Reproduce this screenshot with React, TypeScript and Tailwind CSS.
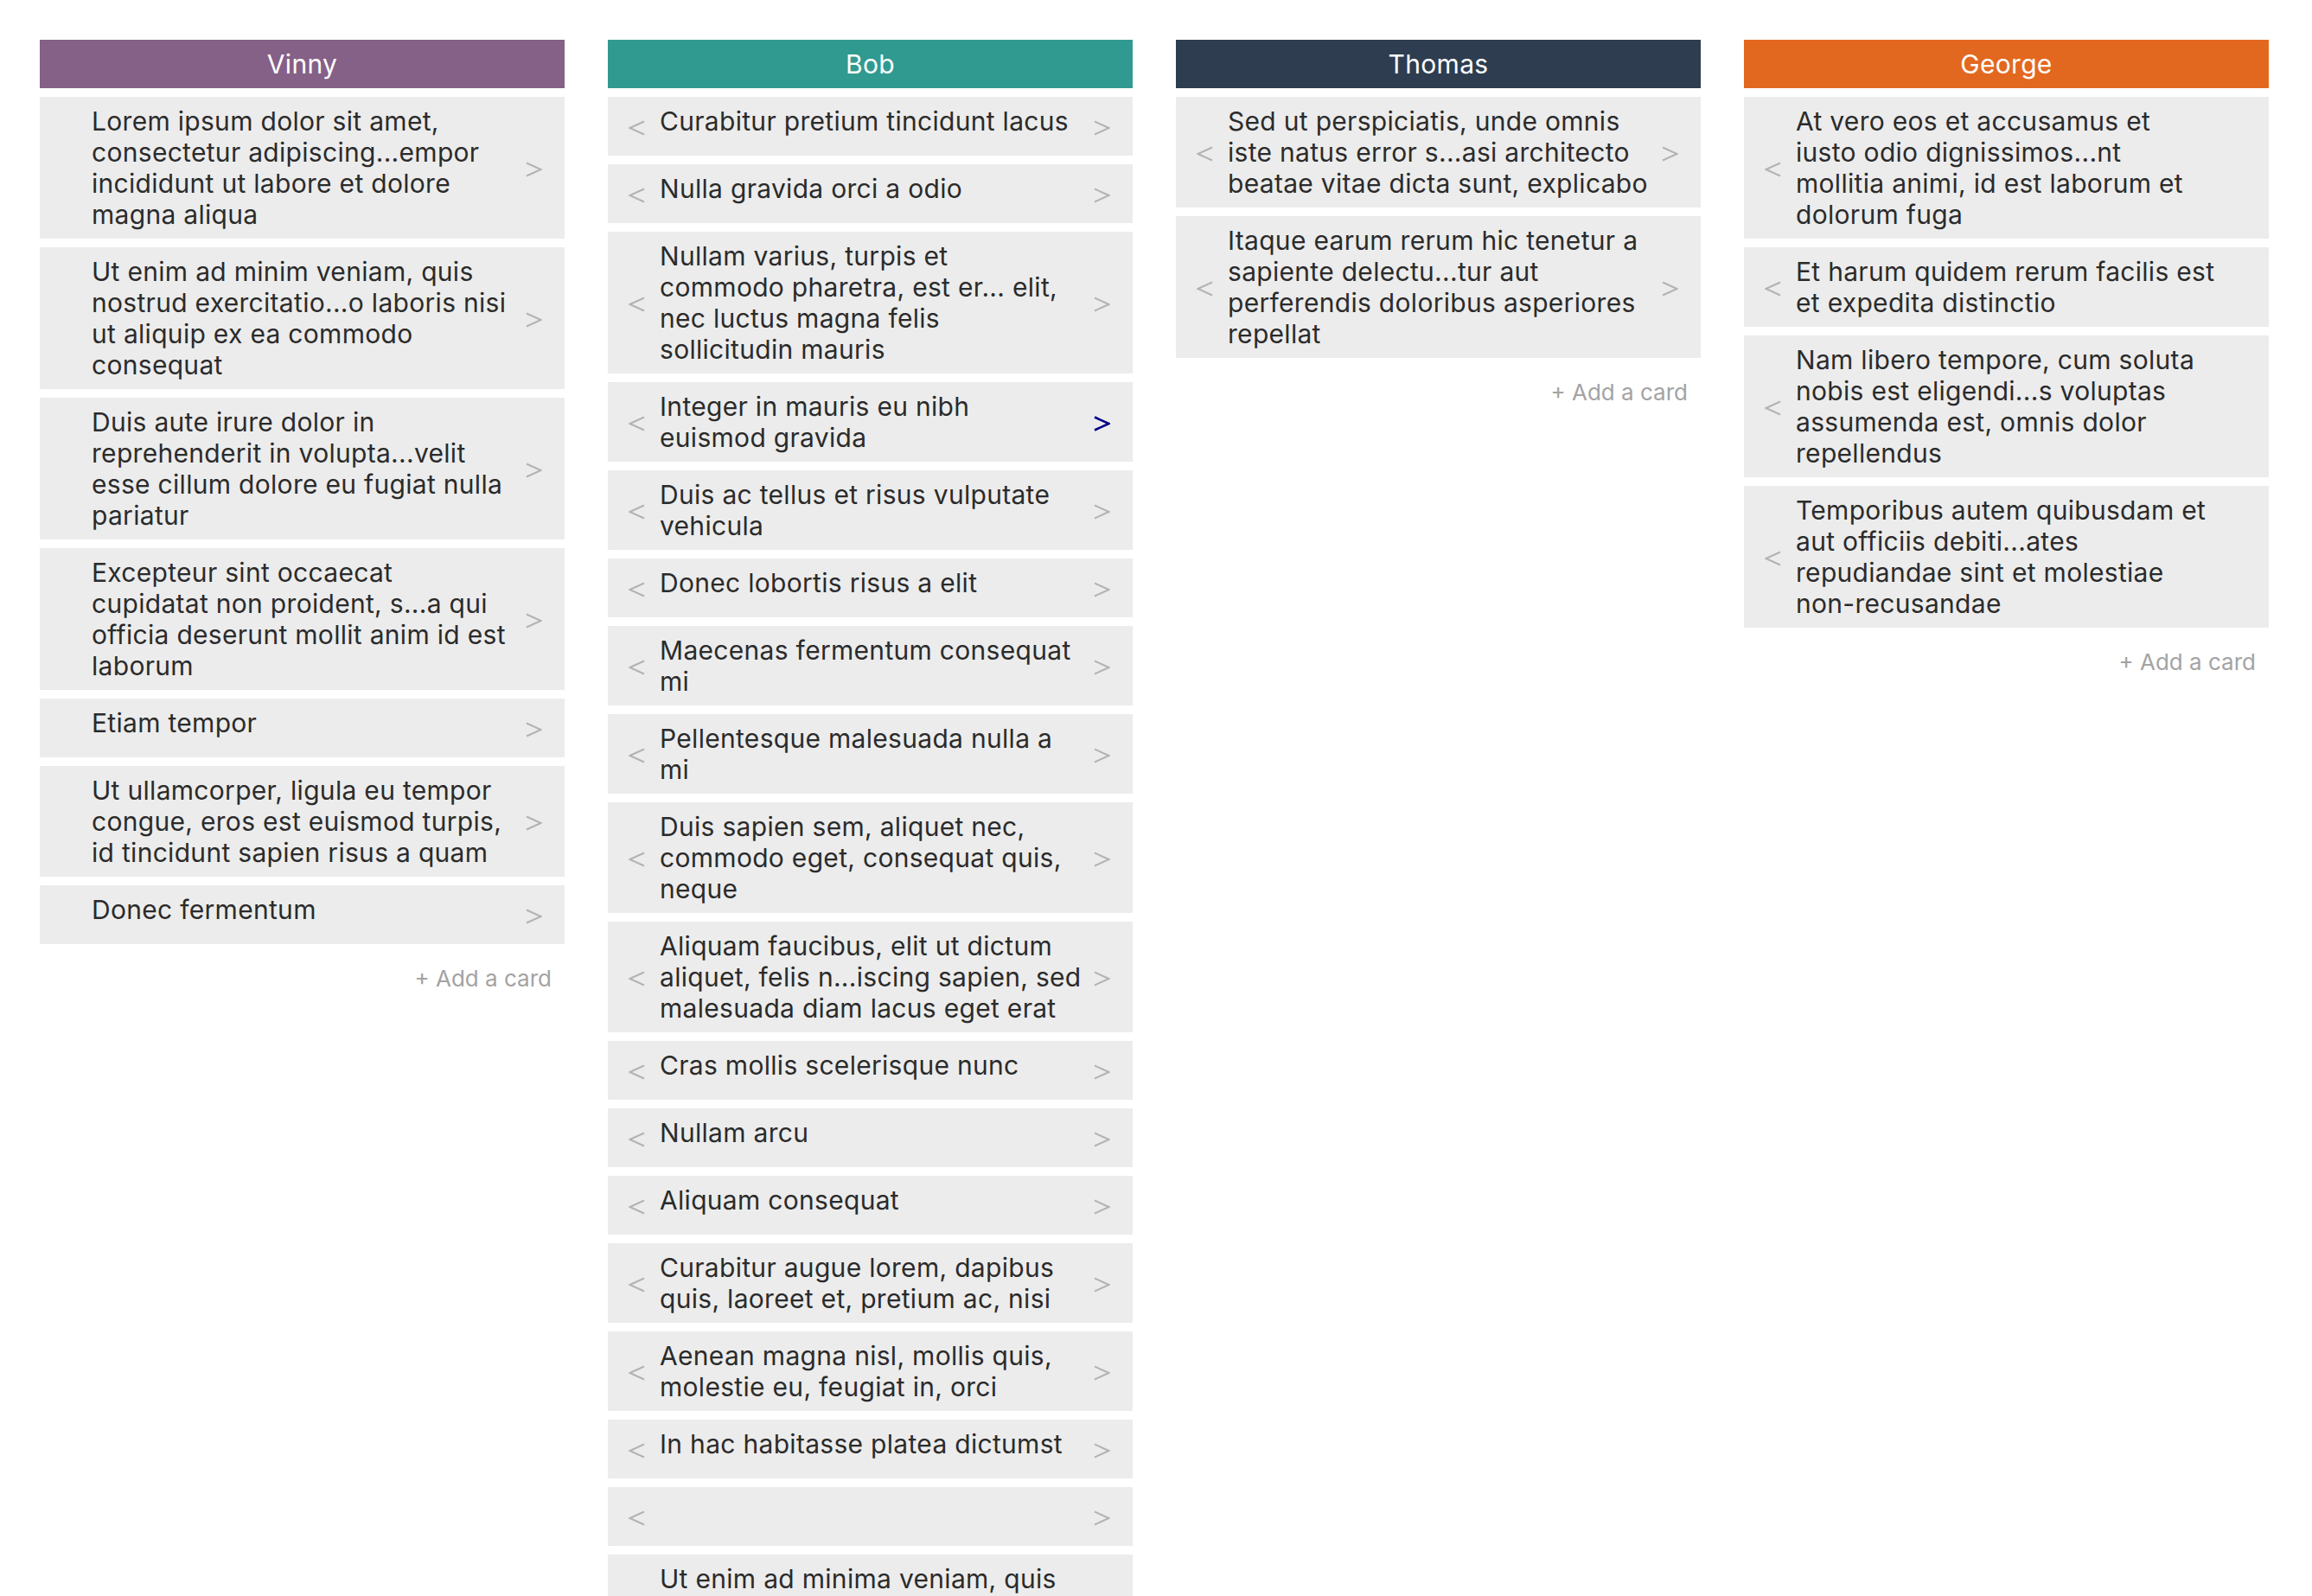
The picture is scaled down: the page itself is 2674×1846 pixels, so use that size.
import React, { FC } from "react";

interface Card {
	lines: string[];
	active?: boolean;
}

interface Lane {
	title: string;
	color: string;
	cards: Card[];
}

const c = (...lines: string[]): Card => ({ lines });

const lanes: Lane[] = [
	{
		title: "Vinny",
		color: "bg-[#856087]",
		cards: [
			c("Lorem ipsum dolor sit amet,", "consectetur adipiscing...empor", "incididunt ut labore et dolore", "magna aliqua"),
			c("Ut enim ad minim veniam, quis", "nostrud exercitatio...o laboris nisi", "ut aliquip ex ea commodo", "consequat"),
			c("Duis aute irure dolor in", "reprehenderit in volupta...velit", "esse cillum dolore eu fugiat nulla", "pariatur"),
			c("Excepteur sint occaecat", "cupidatat non proident, s...a qui", "officia deserunt mollit anim id est", "laborum"),
			c("Etiam tempor"),
			c("Ut ullamcorper, ligula eu tempor", "congue, eros est euismod turpis,", "id tincidunt sapien risus a quam"),
			c("Donec fermentum"),
		],
	},
	{
		title: "Bob",
		color: "bg-[#319a90]",
		cards: [
			c("Curabitur pretium tincidunt lacus"),
			c("Nulla gravida orci a odio"),
			c("Nullam varius, turpis et", "commodo pharetra, est er... elit,", "nec luctus magna felis", "sollicitudin mauris"),
			{ lines: ["Integer in mauris eu nibh", "euismod gravida"], active: true },
			c("Duis ac tellus et risus vulputate", "vehicula"),
			c("Donec lobortis risus a elit"),
			c("Maecenas fermentum consequat", "mi"),
			c("Pellentesque malesuada nulla a", "mi"),
			c("Duis sapien sem, aliquet nec,", "commodo eget, consequat quis,", "neque"),
			c("Aliquam faucibus, elit ut dictum", "aliquet, felis n...iscing sapien, sed", "malesuada diam lacus eget erat"),
			c("Cras mollis scelerisque nunc"),
			c("Nullam arcu"),
			c("Aliquam consequat"),
			c("Curabitur augue lorem, dapibus", "quis, laoreet et, pretium ac, nisi"),
			c("Aenean magna nisl, mollis quis,", "molestie eu, feugiat in, orci"),
			c("In hac habitasse platea dictumst"),
			c(),
			c("Ut enim ad minima veniam, quis", "nostrum exercitationem ullam", "corporis suscipit laboriosam"),
		],
	},
	{
		title: "Thomas",
		color: "bg-[#2e3d50]",
		cards: [
			c("Sed ut perspiciatis, unde omnis", "iste natus error s...asi architecto", "beatae vitae dicta sunt, explicabo"),
			c("Itaque earum rerum hic tenetur a", "sapiente delectu...tur aut", "perferendis doloribus asperiores", "repellat"),
		],
	},
	{
		title: "George",
		color: "bg-[#e3681f]",
		cards: [
			c("At vero eos et accusamus et", "iusto odio dignissimos...nt", "mollitia animi, id est laborum et", "dolorum fuga"),
			c("Et harum quidem rerum facilis est", "et expedita distinctio"),
			c("Nam libero tempore, cum soluta", "nobis est eligendi...s voluptas", "assumenda est, omnis dolor", "repellendus"),
			c("Temporibus autem quibusdam et", "aut officiis debiti...ates", "repudiandae sint et molestiae", "non-recusandae"),
		],
	},
];

// thin angle, drawn like the "<" / ">" glyph in the board
const Arrow: FC<{ dir: "left" | "right"; hidden?: boolean; active?: boolean }> = ({ dir, hidden, active }) => (
	<button
		className={`w-[60px] h-[48px] shrink-0 flex items-center pt-[3px] ${
			dir === "left" ? "justify-start pl-[24px]" : "justify-end pr-[26px]"
		} ${hidden ? "invisible" : ""} ${active ? "text-[#00008b]" : "text-[#b3b3b3]"}`}
	>
		<svg width="19" height="18" viewBox="0 0 19 18" fill="none">
			<polyline
				points={dir === "left" ? "18,1.5 1.5,9 18,16.5" : "1,1.5 17.5,9 1,16.5"}
				stroke="currentColor"
				strokeWidth={active ? 2.6 : 2}
				strokeLinejoin="miter"
			/>
		</svg>
	</button>
);

const CardItem: FC<{ card: Card; first: boolean; last: boolean }> = ({ card, first, last }) => (
	<div className="flex items-center bg-[#ececec] py-[10px]">
		<Arrow dir="left" hidden={first} />
		<div className="flex-1 min-w-0 self-start text-[30px] leading-[36px] text-[#2b2b2b] tracking-[0.3px] whitespace-nowrap">
			{card.lines.map((line, i) => (
				<div key={i}>{line}</div>
			))}
		</div>
		<Arrow dir="right" hidden={last} active={card.active} />
	</div>
);

export default function App() {
	return (
		<div
			className="min-h-screen bg-white pl-[46px] pr-[50px] pt-[46px] flex gap-[50px] items-start"
			style={{ fontFamily: "Inter, 'Noto Sans', sans-serif" }}
		>
			{lanes.map((lane, li) => (
				<div key={lane.title} className="flex-1 min-w-0 flex flex-col">
					<div className={`${lane.color} h-[56px] flex items-center justify-center text-white text-[30px] tracking-[0.3px]`}>
						{lane.title}
					</div>
					<div className="flex flex-col gap-[10px] mt-[10px]">
						{lane.cards.map((card, ci) => (
							<CardItem key={ci} card={card} first={li === 0} last={li === lanes.length - 1} />
						))}
					</div>
					<div className="mt-[22px] pr-[15px] text-right text-[26px] leading-[36px] text-[#a3a3a3]">
						+ Add a card
					</div>
				</div>
			))}
		</div>
	);
}
